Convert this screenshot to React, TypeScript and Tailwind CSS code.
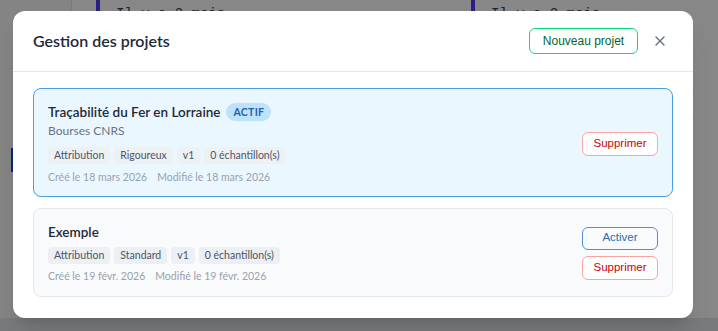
import { X } from "lucide-react";

interface Project {
  id: string;
  name: string;
  subtitle?: string;
  tags: string[];
  created: string;
  updated: string;
  active: boolean;
}

const projects: Project[] = [
  {
    id: "p1",
    name: "Traçabilité du Fer en Lorraine",
    subtitle: "Bourses CNRS",
    tags: ["Attribution", "Rigoureux", "v1", "0 échantillon(s)"],
    created: "18 mars 2026",
    updated: "18 mars 2026",
    active: true,
  },
  {
    id: "p2",
    name: "Exemple",
    tags: ["Attribution", "Standard", "v1", "0 échantillon(s)"],
    created: "19 févr. 2026",
    updated: "19 févr. 2026",
    active: false,
  },
];

export default function App() {
  return (
    <div className="relative h-[331px] w-[718px] overflow-hidden bg-white font-['Lato',sans-serif]">
      {/* Page behind the modal */}
      <div className="flex h-full">
        <aside className="w-[72px] shrink-0 bg-gray-50 border-r border-gray-200">
          <div className="mt-[148px] ml-[11px] h-[24px] w-[3px] bg-blue-700" />
        </aside>
        <main className="flex flex-1 gap-4 px-6">
          <div className="w-[359px] shrink-0">
            <div className="border-l-4 border-indigo-600 pl-4 pt-1 font-['Liberation_Mono',monospace] text-sm text-gray-700">
              Il y a 2 mois
            </div>
          </div>
          <div className="flex-1">
            <div className="border-l-4 border-indigo-600 pl-4 pt-1 font-['Liberation_Mono',monospace] text-sm text-gray-700">
              Il y a 2 mois
            </div>
            <div className="mt-[70px] h-[26px] border-y border-gray-300" />
          </div>
        </main>
      </div>
      <div className="absolute inset-x-0 bottom-0 h-[13px] bg-gray-200" />

      {/* Overlay */}
      <div className="absolute inset-0 bg-black/[0.47]" />

      {/* Modal */}
      <div className="absolute left-[13px] top-[11px] w-[680px] rounded-xl bg-white shadow-xl">
        <div className="flex h-[61px] items-center justify-between border-b border-gray-200 pl-5 pr-[25px]">
          <h2 className="text-[16px] font-semibold text-gray-800">Gestion des projets</h2>
          <div className="flex items-center gap-[14px]">
            <button className="h-[26px] w-[109px] rounded-md border border-green-400 font-['Liberation_Sans',sans-serif] text-[12px] text-green-800">
              Nouveau projet
            </button>
            <button className="text-gray-500">
              <X size={16} strokeWidth={2} />
            </button>
          </div>
        </div>

        <div className="flex flex-col gap-[11px] px-5 pt-[16px] pb-[21px]">
          {projects.map((p) => (
            <ProjectCard key={p.id} project={p} />
          ))}
        </div>
      </div>
    </div>
  );
}

function ProjectCard({ project }: { project: Project }) {
  const { active } = project;
  return (
    <div
      className={
        active
          ? "flex items-center justify-between rounded-lg border border-[#4a9de0] bg-[#ebf7ff] px-[14px] pt-[13px] pb-[11px]"
          : "flex items-center justify-between rounded-lg border border-gray-200 bg-gray-50 px-[14px] pt-[13px] pb-[12px]"
      }
    >
      <div>
        <div className="flex items-center gap-[6px]">
          <span className="text-[13.5px] leading-5 font-semibold text-gray-800">{project.name}</span>
          {active && (
            <span className="rounded-full bg-[#bde2fb] px-[7px] text-[10.5px] leading-[18px] font-bold tracking-[0.3px] text-[#2463a8]">
              ACTIF
            </span>
          )}
        </div>
        {project.subtitle && (
          <div className="text-[12px] leading-[18px] text-gray-500">{project.subtitle}</div>
        )}
        <div className={active ? "mt-[7px] flex gap-1" : "mt-[5px] flex gap-1"}>
          {project.tags.map((t) => (
            <span
              key={t}
              className={
                active
                  ? "rounded bg-[#eef1f4] px-[6px] py-[1px] text-[10.5px] leading-[15px] text-gray-600"
                  : "rounded bg-[#eceff3] px-[6px] py-[1px] text-[10.5px] leading-[15px] text-gray-600"
              }
            >
              {t}
            </span>
          ))}
        </div>
        <div className={active ? "mt-[5px] flex gap-[10px] text-[10.5px] leading-4 text-gray-400" : "mt-[4px] flex gap-[10px] text-[10.5px] leading-4 text-gray-400"}>
          <span>Créé le {project.created}</span>
          <span>Modifié le {project.updated}</span>
        </div>
      </div>

      <div className="flex flex-col gap-[6px] font-['Liberation_Sans',sans-serif]">
        {!active && (
          <button className="h-[23px] w-[76px] rounded-md border border-[#4a90d9] text-[11.5px] text-[#2b6cb0]">
            Activer
          </button>
        )}
        <button className="h-[24px] w-[76px] rounded-md border border-red-300 bg-white text-[11.5px] text-red-700">
          Supprimer
        </button>
      </div>
    </div>
  );
}
